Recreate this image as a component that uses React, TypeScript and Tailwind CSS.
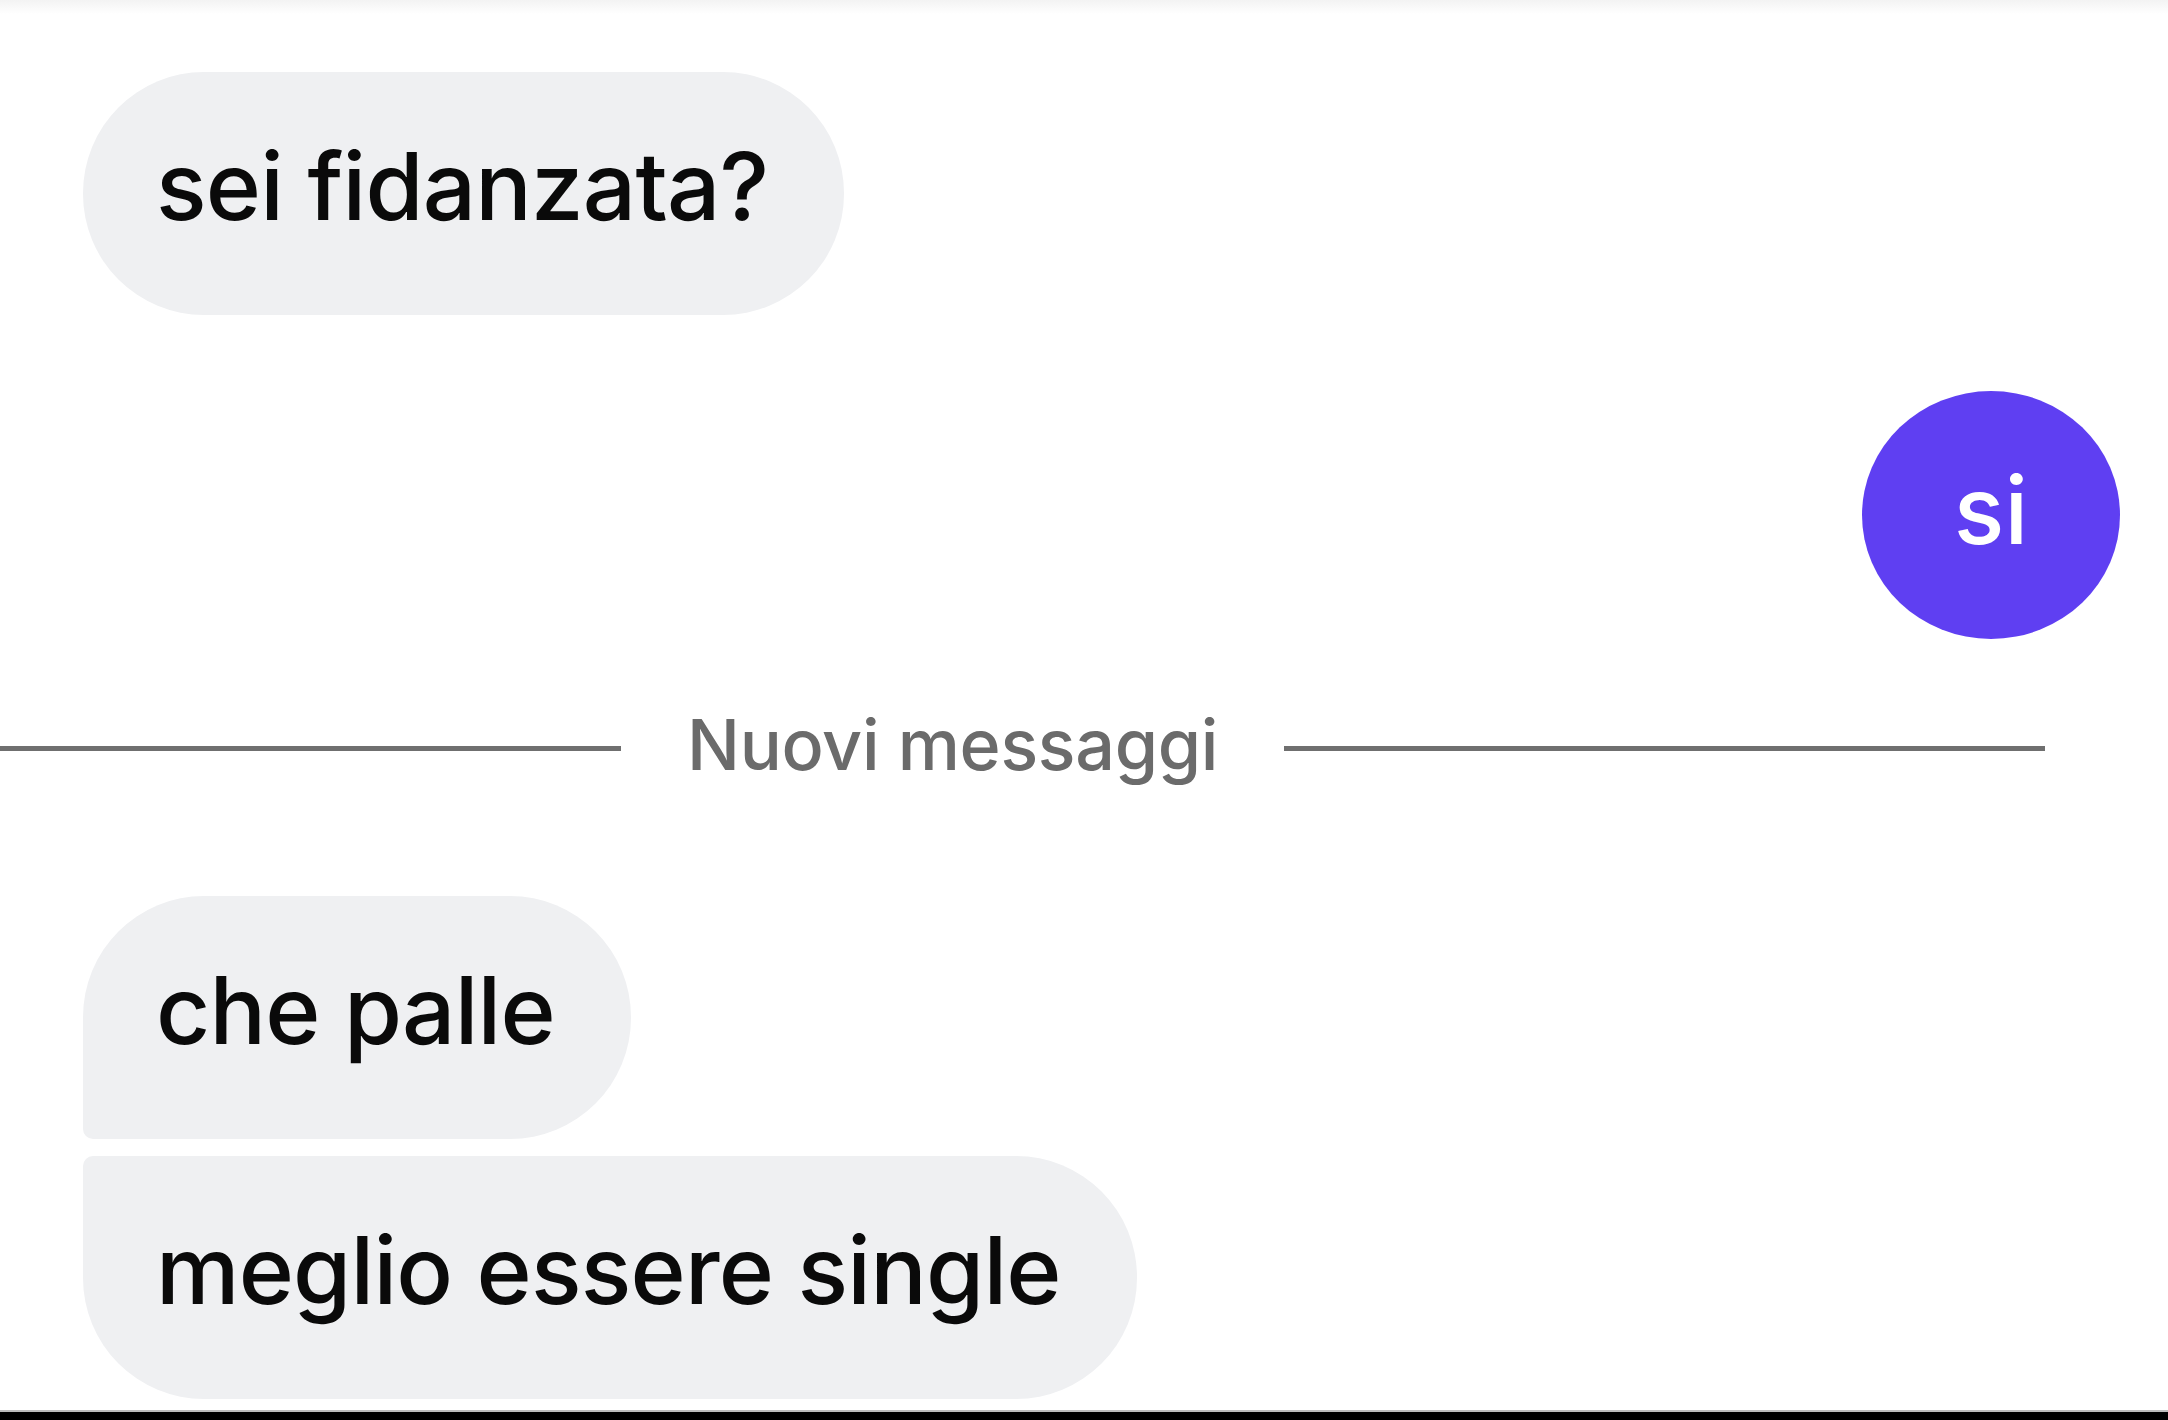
import React from 'react'

// chat thread snapshot
const font = { fontFamily: 'Inter, "Liberation Sans", Arial, sans-serif' }

function Bubble({ text, shape }: { text: string; shape: string }) {
  return (
    <div className={`h-[243px] bg-[#eff0f2] flex items-center pl-[73px] pr-[76px] text-[94px] font-[545] leading-none text-[#0a0a0a] tracking-[-0.8px] ${shape}`}>
      <span className="-mt-[16px]">{text}</span>
    </div>
  )
}

export default function App() {
  return (
    <div className="w-[2168px] h-[1420px] bg-white flex flex-col overflow-hidden" style={font}>
      <div className="h-[14px] bg-gradient-to-b from-[#f3f3f3] to-white" />
      <div className="flex-1 flex flex-col pt-[58px]">
        {/* incoming */}
        <div className="flex pl-[83px]">
          <Bubble text="sei fidanzata?" shape="rounded-[121px]" />
        </div>

        {/* outgoing */}
        <div className="flex justify-end pr-[48px] mt-[76px]">
          <div className="w-[258px] h-[248px] rounded-[50%] bg-[#5f3ff2] flex items-center justify-center text-white text-[94px] font-[545] leading-none">
            <span className="-mt-[10px]">si</span>
          </div>
        </div>

        {/* new messages divider */}
        <div className="flex items-center h-[100px] mt-[59px] pr-[123px]">
          <div className="w-[621px] h-[5px] bg-[#6f6f6f]" />
          <span className="mx-[66px] text-[70px] font-[545] text-[#6b6b6b] leading-none tracking-[-0.3px] -mt-[6px]">Nuovi messaggi</span>
          <div className="flex-1 h-[5px] bg-[#6f6f6f]" />
        </div>

        <div className="flex flex-col items-start pl-[83px] mt-[98px] gap-[17px]">
          <Bubble text="che palle" shape="rounded-[121px] rounded-bl-[10px]" />
          <Bubble text="meglio essere single" shape="rounded-[121px] rounded-tl-[10px]" />
        </div>
      </div>
      <div className="h-[2px] bg-[#bdbdbd]" />
      <div className="h-[8px] bg-black" />
    </div>
  )
}
